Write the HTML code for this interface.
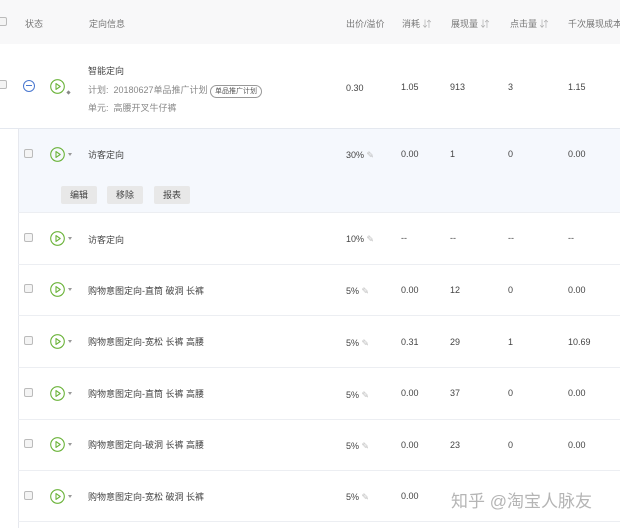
<!DOCTYPE html>
<html><head><meta charset="utf-8"><style>
*{margin:0;padding:0;box-sizing:border-box}
body{width:620px;height:527px;overflow:hidden;background:#fff;font-family:"Liberation Sans","Noto Sans CJK SC",sans-serif;font-size:9px;color:#444;position:relative}
.a{position:absolute;white-space:nowrap}
.cb{position:absolute;width:9px;height:9px;border:1px solid #bbb;border-radius:2px;background:#f4f4f4}
.pl{position:absolute;width:15px;height:15px}
.dd{position:absolute;width:0;height:0;border-top:3px solid #999;border-left:2px solid transparent;border-right:2px solid transparent}
.line{position:absolute;left:18px;right:0;height:1px;background:#eceef2}
.pen{color:#bbb;font-size:9px}
.h{color:#777}
.btn{position:absolute;top:186px;height:18px;background:#e8e8e8;border-radius:2px;color:#444;padding:0 9px;line-height:18px}
</style></head><body>
<svg width="0" height="0" style="position:absolute"><defs><symbol id="p" viewBox="0 0 15 15"><circle cx="7.5" cy="7.5" r="6.8" fill="none" stroke="#6bb33a" stroke-width="1.1"/><path d="M6 4.6 L10.2 7.5 L6 10.4 Z" fill="none" stroke="#6bb33a" stroke-width="1.1" stroke-linejoin="round"/></symbol></defs></svg>
<div class="a" style="left:0;top:0;width:620px;height:44px;background:#f8f8f9"></div>
<div class="cb" style="left:-2px;top:17px"></div>
<div class="a h" style="left:25px;top:17px">状态</div>
<div class="a h" style="left:89px;top:17px">定向信息</div>
<div class="a h" style="left:346px;top:17px">出价/溢价</div>
<div class="a h" style="left:402px;top:17px">消耗 <span style="color:#aaa">⇵</span></div>
<div class="a h" style="left:451px;top:17px">展现量 <span style="color:#aaa">⇵</span></div>
<div class="a h" style="left:510px;top:17px">点击量 <span style="color:#aaa">⇵</span></div>
<div class="a h" style="left:568px;top:17px">千次展现成本</div>

<div class="cb" style="left:-2px;top:80px"></div>
<div class="a" style="left:23px;top:80px;width:12px;height:12px;border:1px solid #4a78d0;border-radius:50%"></div>
<div class="a" style="left:26px;top:85px;width:6px;height:1px;background:#4a78d0"></div>
<svg class="pl" style="left:50px;top:79px"><use href="#p"/></svg>
<div class="a" style="left:67px;top:91px;width:3px;height:3px;background:#888;transform:rotate(45deg)"></div>
<div class="a" style="left:88px;top:64px">智能定向</div>
<div class="a" style="left:88px;top:83px;color:#888">计划:&nbsp; 20180627单品推广计划 <span style="display:inline-block;border:1px solid #999;border-radius:7px;padding:0 4px;font-size:7px;color:#555;line-height:11px">单品推广计划</span></div>
<div class="a" style="left:88px;top:101px;color:#888">单元:&nbsp; 高腰开叉牛仔裤</div>
<div class="a" style="left:346px;top:83px">0.30</div>
<div class="a" style="left:401px;top:82px">1.05</div>
<div class="a" style="left:450px;top:82px">913</div>
<div class="a" style="left:508px;top:82px">3</div>
<div class="a" style="left:568px;top:82px">1.15</div>

<div class="a" style="left:0;top:128px;width:620px;height:1px;background:#e4e8ef"></div>
<div class="a" style="left:18px;top:128px;width:1px;height:400px;background:#e6e8ee"></div>
<div class="a" style="left:19px;top:129px;width:601px;height:83px;background:#f5f8fd"></div>
<div class="cb" style="left:24px;top:149px"></div>
<svg class="pl" style="left:50px;top:147px"><use href="#p"/></svg><div class="dd" style="left:68px;top:153px"></div>
<div class="a" style="left:88px;top:148px">访客定向</div>
<div class="a" style="left:346px;top:150px">30% <span class="pen">✎</span></div>
<div class="a" style="left:401px;top:149px">0.00</div>
<div class="a" style="left:450px;top:149px">1</div>
<div class="a" style="left:508px;top:149px">0</div>
<div class="a" style="left:568px;top:149px">0.00</div>
<div class="btn" style="left:61px">编辑</div>
<div class="btn" style="left:107px">移除</div>
<div class="btn" style="left:154px">报表</div>
<div class="line" style="top:212px"></div>

<div class="cb" style="left:24px;top:233px"></div><svg class="pl" style="left:50px;top:231px"><use href="#p"/></svg><div class="dd" style="left:68px;top:237px"></div>
<div class="a" style="left:88px;top:233px">访客定向</div><div class="a" style="left:346px;top:234px">10% <span class="pen">✎</span></div>
<div class="a" style="left:401px;top:233px">--</div><div class="a" style="left:450px;top:233px">--</div><div class="a" style="left:508px;top:233px">--</div><div class="a" style="left:568px;top:233px">--</div>
<div class="line" style="top:264px"></div>

<div class="cb" style="left:24px;top:284px"></div><svg class="pl" style="left:50px;top:282px"><use href="#p"/></svg><div class="dd" style="left:68px;top:288px"></div>
<div class="a" style="left:88px;top:284px">购物意图定向-直筒 破洞 长裤</div><div class="a" style="left:346px;top:286px">5% <span class="pen">✎</span></div>
<div class="a" style="left:401px;top:285px">0.00</div><div class="a" style="left:450px;top:285px">12</div><div class="a" style="left:508px;top:285px">0</div><div class="a" style="left:568px;top:285px">0.00</div>
<div class="line" style="top:315px"></div>

<div class="cb" style="left:24px;top:336px"></div><svg class="pl" style="left:50px;top:334px"><use href="#p"/></svg><div class="dd" style="left:68px;top:340px"></div>
<div class="a" style="left:88px;top:335px">购物意图定向-宽松 长裤 高腰</div><div class="a" style="left:346px;top:338px">5% <span class="pen">✎</span></div>
<div class="a" style="left:401px;top:337px">0.31</div><div class="a" style="left:450px;top:337px">29</div><div class="a" style="left:508px;top:337px">1</div><div class="a" style="left:568px;top:337px">10.69</div>
<div class="line" style="top:367px"></div>

<div class="cb" style="left:24px;top:388px"></div><svg class="pl" style="left:50px;top:386px"><use href="#p"/></svg><div class="dd" style="left:68px;top:392px"></div>
<div class="a" style="left:88px;top:387px">购物意图定向-直筒 长裤 高腰</div><div class="a" style="left:346px;top:390px">5% <span class="pen">✎</span></div>
<div class="a" style="left:401px;top:388px">0.00</div><div class="a" style="left:450px;top:388px">37</div><div class="a" style="left:508px;top:388px">0</div><div class="a" style="left:568px;top:388px">0.00</div>
<div class="line" style="top:419px"></div>

<div class="cb" style="left:24px;top:439px"></div><svg class="pl" style="left:50px;top:437px"><use href="#p"/></svg><div class="dd" style="left:68px;top:443px"></div>
<div class="a" style="left:88px;top:438px">购物意图定向-破洞 长裤 高腰</div><div class="a" style="left:346px;top:441px">5% <span class="pen">✎</span></div>
<div class="a" style="left:401px;top:440px">0.00</div><div class="a" style="left:450px;top:440px">23</div><div class="a" style="left:508px;top:440px">0</div><div class="a" style="left:568px;top:440px">0.00</div>
<div class="line" style="top:470px"></div>

<div class="cb" style="left:24px;top:491px"></div><svg class="pl" style="left:50px;top:489px"><use href="#p"/></svg><div class="dd" style="left:68px;top:495px"></div>
<div class="a" style="left:88px;top:490px">购物意图定向-宽松 破洞 长裤</div><div class="a" style="left:346px;top:492px">5% <span class="pen">✎</span></div>
<div class="a" style="left:401px;top:491px">0.00</div>
<div class="a" style="left:451px;top:487px;font-size:17px;color:#b5b5b5">知乎 @淘宝人脉友</div>
<div class="line" style="top:521px"></div>
</body></html>
